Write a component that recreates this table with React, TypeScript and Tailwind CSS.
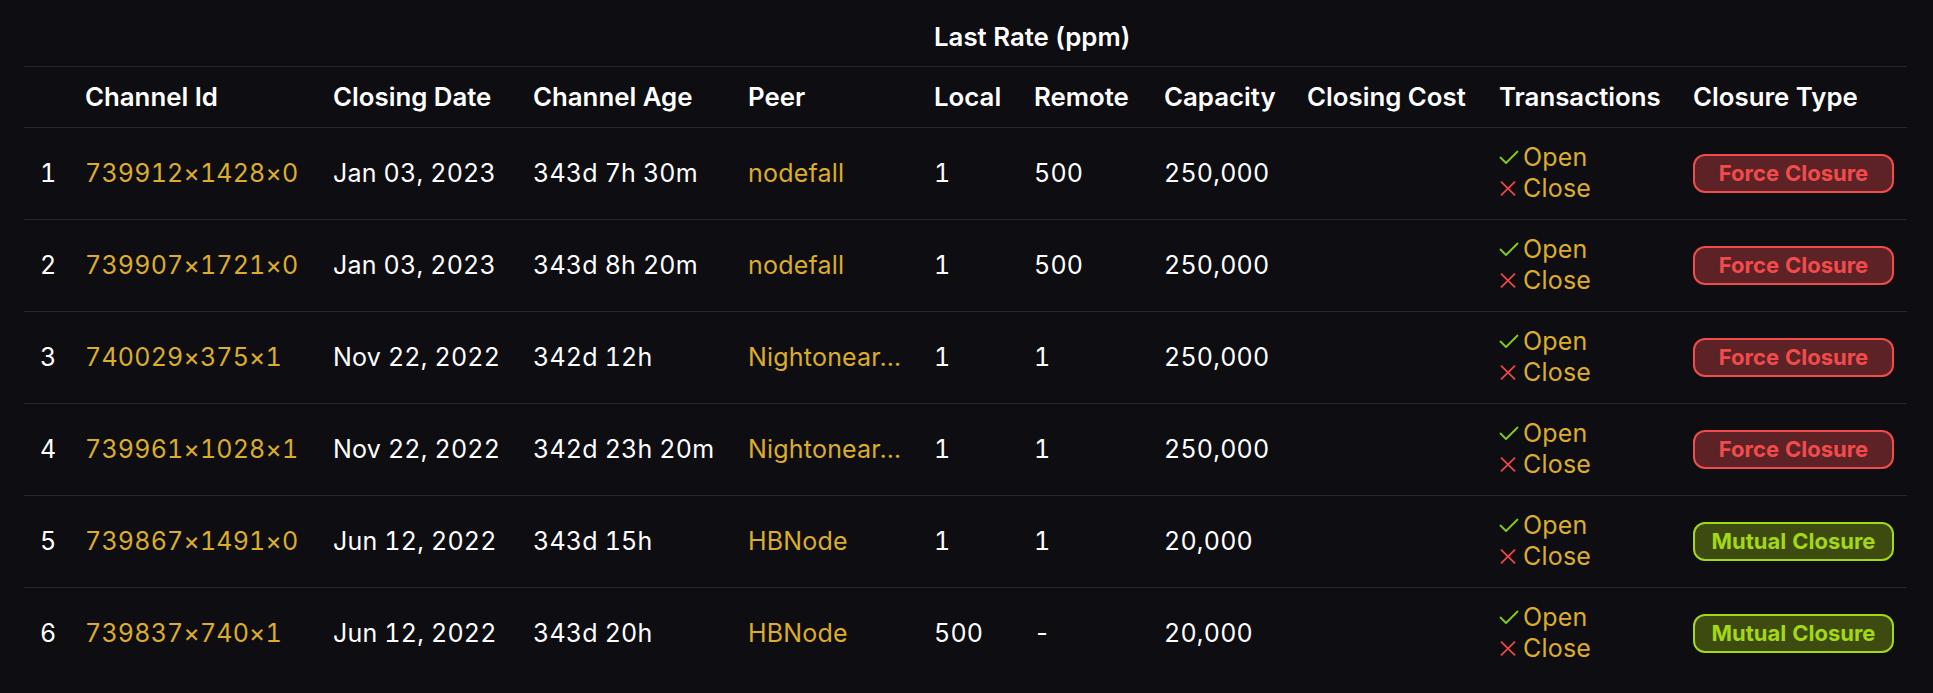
import React from "react";

type Row = {
  id: string;
  date: string;
  age: string;
  peer: string;
  local: string;
  remote: string;
  capacity: string;
  type: "force" | "mutual";
};

const rows: Row[] = [
  { id: "739912×1428×0", date: "Jan 03, 2023", age: "343d 7h 30m", peer: "nodefall", local: "1", remote: "500", capacity: "250,000", type: "force" },
  { id: "739907×1721×0", date: "Jan 03, 2023", age: "343d 8h 20m", peer: "nodefall", local: "1", remote: "500", capacity: "250,000", type: "force" },
  { id: "740029×375×1", date: "Nov 22, 2022", age: "342d 12h", peer: "Nightonear…", local: "1", remote: "1", capacity: "250,000", type: "force" },
  { id: "739961×1028×1", date: "Nov 22, 2022", age: "342d 23h 20m", peer: "Nightonear…", local: "1", remote: "1", capacity: "250,000", type: "force" },
  { id: "739867×1491×0", date: "Jun 12, 2022", age: "343d 15h", peer: "HBNode", local: "1", remote: "1", capacity: "20,000", type: "mutual" },
  { id: "739837×740×1", date: "Jun 12, 2022", age: "343d 20h", peer: "HBNode", local: "500", remote: "-", capacity: "20,000", type: "mutual" },
];

const widths = [45, 248, 200, 215, 186, 100, 130, 143, 192, 194, 230];

function CheckIcon() {
  return (
    <svg width="21" height="15" viewBox="0 0 21 15" className="mr-[3px] shrink-0">
      <path d="M1.5 7.5 L7 13 L18.5 1.5" fill="none" stroke="#84cc16" strokeWidth="1.8" strokeLinecap="round" strokeLinejoin="round" />
    </svg>
  );
}

function XIcon() {
  return (
    <svg width="21" height="15" viewBox="0 0 21 15" className="mr-[3px] shrink-0">
      <path d="M2.5 1.2 L15.5 13.8 M15.5 1.2 L2.5 13.8" fill="none" stroke="#f04848" strokeWidth="1.8" strokeLinecap="round" />
    </svg>
  );
}

function Badge({ type }: { type: "force" | "mutual" }) {
  if (type === "force") {
    return (
      <div className="w-[201px] h-[39px] rounded-[12px] border-2 border-[#f24b4b] bg-[#5c2226] text-[#f24b4b] font-bold text-[22px] flex items-center justify-center">
        Force Closure
      </div>
    );
  }
  return (
    <div className="w-[201px] h-[39px] rounded-[12px] border-2 border-[#a3d815] bg-[#3d4a10] text-[#a3d815] font-bold text-[22px] flex items-center justify-center">
      Mutual Closure
    </div>
  );
}

const cell = "pl-[16px] text-[25px] leading-[30px] tracking-[0.2px] whitespace-nowrap";

export default function App() {
  const headers = [
    "",
    "Channel Id",
    "Closing Date",
    "Channel Age",
    "Peer",
    "Local",
    "Remote",
    "Capacity",
    "Closing Cost",
    "Transactions",
    "Closure Type",
  ];
  return (
    <div className="min-h-[693px] w-full bg-[#0e0d12] px-[24px] font-[family-name:Inter] text-white">
      <table className="table-fixed w-[1883px] border-collapse">
        <colgroup>
          {widths.map((w, i) => (
            <col key={i} style={{ width: w }} />
          ))}
        </colgroup>
        <thead>
          <tr className="border-b border-[#27262c]">
            <th colSpan={5} className="h-[66px] p-0"></th>
            <th colSpan={6} className="h-[66px] pl-[16px] text-left align-top pt-[21px] text-[25.8px] font-semibold leading-[31px]">
              Last Rate (ppm)
            </th>
          </tr>
          <tr className="border-b border-[#27262c]">
            {headers.map((h, i) => (
              <th key={i} className="h-[61px] pl-[16px] text-left align-middle text-[25.8px] font-semibold leading-[31px] whitespace-nowrap">
                {h}
              </th>
            ))}
          </tr>
        </thead>
        <tbody className="tabular-nums">
          {rows.map((r, i) => (
            <tr key={i} className={i < rows.length - 1 ? "border-b border-[#27262c]" : ""}>
              <td className={`h-[92px] ${cell}`}>{i + 1}</td>
              <td className={`${cell} text-[#dbad2a]`}>{r.id}</td>
              <td className={cell}>{r.date}</td>
              <td className={cell}>{r.age}</td>
              <td className={`${cell} text-[#dbad2a]`}>{r.peer}</td>
              <td className={cell}>{r.local}</td>
              <td className={cell}>{r.remote}</td>
              <td className={cell}>{r.capacity}</td>
              <td className={cell}></td>
              <td className="pl-[16px] text-[25px] leading-[31px] tracking-[0.2px] text-[#dbad2a]">
                <div className="flex items-center">
                  <CheckIcon />
                  <span>Open</span>
                </div>
                <div className="flex items-center">
                  <XIcon />
                  <span>Close</span>
                </div>
              </td>
              <td className="pl-[16px]">
                <Badge type={r.type} />
              </td>
            </tr>
          ))}
        </tbody>
      </table>
    </div>
  );
}
